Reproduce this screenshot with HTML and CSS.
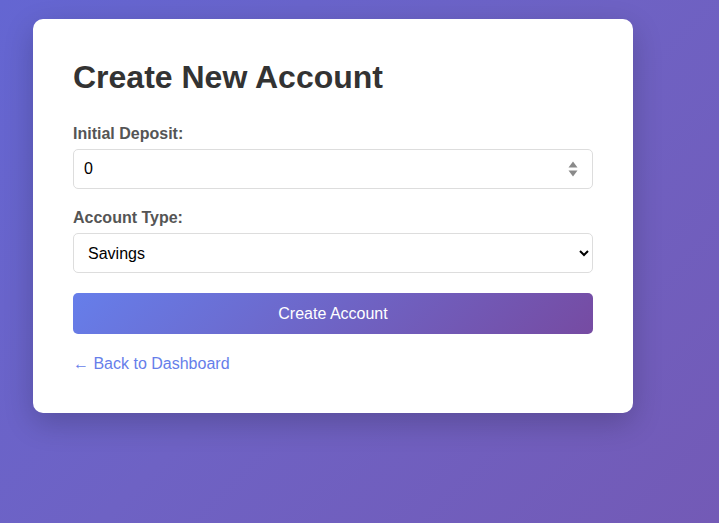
FILE: index.html
```html
<!DOCTYPE html>
<html lang="en">
<head>
<meta charset="utf-8">
<title>Create New Account</title>
<link rel="stylesheet" href="styles.css">
</head>
<body>
<div class="card">
  <h2 class="title">Create New Account</h2>
  <form class="form">
    <div class="form-group">
      <label class="label" for="deposit">Initial Deposit:</label>
      <div class="number-wrap">
        <input class="field" id="deposit" type="number" value="0">
        <svg class="spin" width="10" height="17" viewBox="0 0 10 17" aria-hidden="true">
          <path d="M5 1 L9.5 7 L0.5 7 Z" fill="#8a8a8a"/>
          <path d="M0.5 10 L9.5 10 L5 16 Z" fill="#8a8a8a"/>
        </svg>
      </div>
    </div>
    <div class="form-group">
      <label class="label" for="type">Account Type:</label>
      <select class="field" id="type">
        <option>Savings</option>
        <option>Checking</option>
      </select>
    </div>
    <button class="btn" type="button">Create Account</button>
  </form>
  <div class="back"><a class="back-link" href="#">← Back to Dashboard</a></div>
</div>
</body>
</html>
```
FILE: styles.css
```css
html {
  height: 100%;
  background: linear-gradient(135deg, #6466d2 0%, #6e62c4 50%, #735ab6 100%);
}
body {
  margin: 0;
  min-height: 100%;
  box-sizing: border-box;
  padding: 19px 0 0 33px;
  font-family: "Liberation Sans", Arial, sans-serif;
}
.card {
  width: 600px;
  box-sizing: border-box;
  background: #fff;
  border-radius: 10px;
  padding: 40px;
  box-shadow: 0 10px 30px rgba(0, 0, 0, 0.2);
}
.title {
  margin: 0 0 29px;
  font-size: 32px;
  font-weight: bold;
  color: #333;
}
.form-group {
  margin-bottom: 20px;
}
.label {
  display: block;
  margin-bottom: 6px;
  font-size: 16px;
  font-weight: bold;
  color: #555;
}
.number-wrap {
  position: relative;
}
.spin {
  position: absolute;
  right: 15px;
  top: 50%;
  transform: translateY(-50%);
  pointer-events: none;
}
.field {
  display: block;
  width: 100%;
  box-sizing: border-box;
  height: 40px;
  padding: 10px;
  font-family: "Liberation Sans", Arial, sans-serif;
  font-size: 16px;
  color: #000;
  border: 1px solid #ddd;
  border-radius: 5px;
  background: #fff;
}
.field::-webkit-inner-spin-button,
.field::-webkit-outer-spin-button {
  -webkit-appearance: none;
  margin: 0;
}
.btn {
  display: block;
  width: 100%;
  height: 41px;
  padding: 12px;
  border: none;
  border-radius: 5px;
  background: linear-gradient(135deg, #667eea 0%, #764ba2 100%);
  color: #fff;
  font-family: "Liberation Sans", Arial, sans-serif;
  font-size: 16px;
  cursor: pointer;
}
.back {
  margin-top: 21px;
}
.back-link {
  color: #667eea;
  text-decoration: none;
  font-size: 16px;
}
```
